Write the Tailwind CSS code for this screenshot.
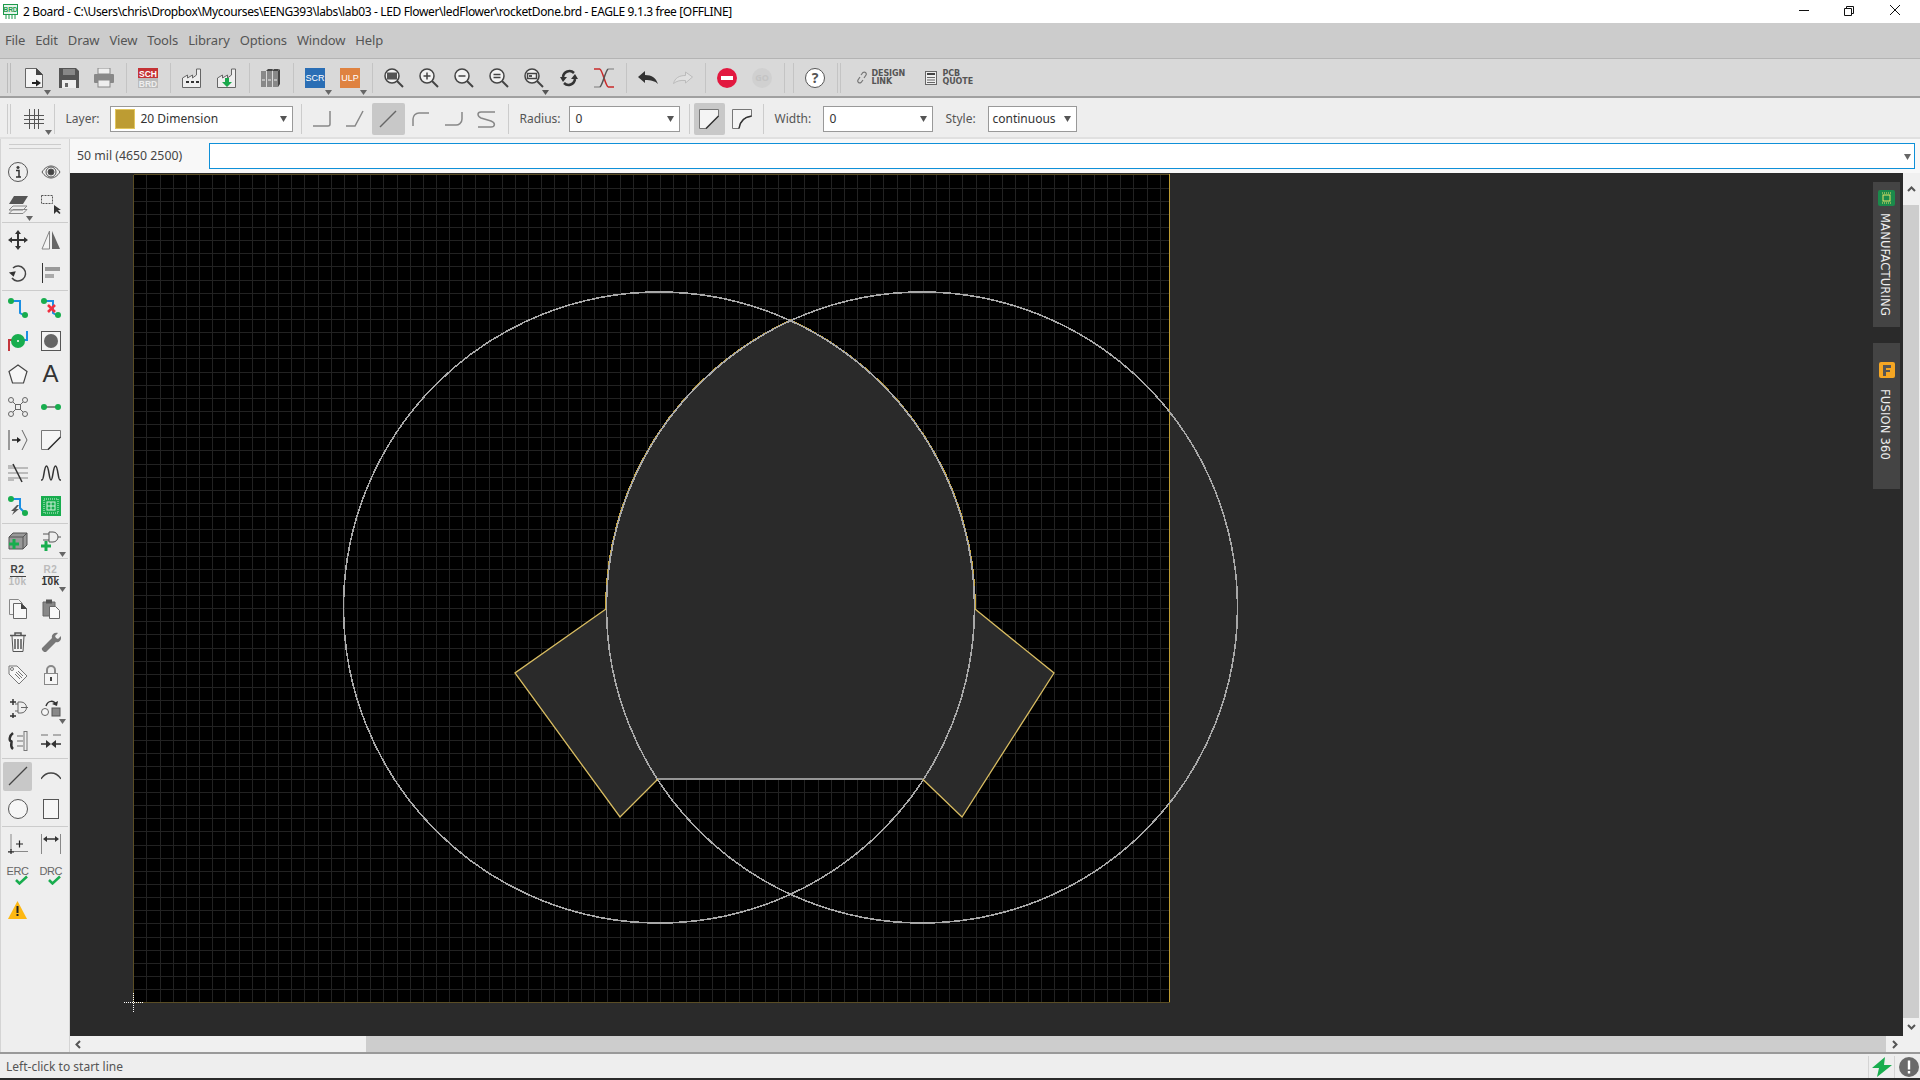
<!DOCTYPE html>
<html lang="en">

<head>
    <meta charset="UTF-8">
    <title>2 Board - EAGLE 9.1.3 free</title>
    <script src="https://cdn.jsdelivr.net/npm/@tailwindcss/browser@4"></script>
</head>

<body class="w-[1920px] h-[1080px] overflow-hidden flex flex-col bg-white text-[#444] text-[12px] font-['Noto_Sans',sans-serif]">

    <!-- Title bar -->
    <header class="h-[23px] shrink-0 bg-white flex items-center relative text-black">
        <svg class="ml-[3px]" width="15" height="15" viewBox="0 0 15 15"><rect x="0.500" y="0.500" width="14" height="10" fill="#e8f5ec" stroke="#1d9a4b"/><path d="M3 11v4M6 11v4M9 11v4M12 11v4" stroke="#1d9a4b"/><text x="7.500" y="8" font-size="6.500" font-weight="bold" text-anchor="middle" fill="#1d9a4b" font-family="Liberation Sans">BRD</text></svg>
        <span class="ml-[5px] text-[12px] tracking-[-0.36px]">2 Board - C:\Users\chris\Dropbox\Mycourses\EENG393\labs\lab03 - LED Flower\ledFlower\rocketDone.brd - EAGLE 9.1.3 free [OFFLINE]</span>
        <svg class="absolute left-[1799px] top-[5px]" width="106" height="12" viewBox="0 0 106 12" fill="none" stroke="#111"><path d="M0 5.500h10"/><path d="M45.500 3.500h7v7h-7zM47.500 3.500v-2h7v7h-2"/><path d="M91 0l10 10M101 0L91 10"/></svg>
    </header>

    <!-- Menu bar -->
    <nav class="h-[36px] shrink-0 bg-[#cccccc] border-b border-[#b4b4b4] flex items-center pl-[5px] gap-[10px] text-[13px] tracking-[-0.15px] text-[#555]">
        <span>File</span><span>Edit</span><span>Draw</span><span>View</span><span>Tools</span><span>Library</span><span>Options</span><span>Window</span><span>Help</span>
    </nav>

    <!-- Main toolbar -->
    <div class="h-[39px] shrink-0 bg-[#d9d9d9] border-b-2 border-[#a0a0a0] flex items-center">
        <div class="w-[16.500px] h-[30px] flex justify-start pl-[7px] gap-[2px]"><i class="w-px h-full bg-[#bbb]"></i><i class="w-px h-full bg-[#bbb]"></i></div>
        <div class="w-[35px] h-[34px] flex items-center justify-center relative">
            <svg width="20" height="20" viewBox="0 0 20 20"><path d="M1.500.5h11l6 6v13h-17z" fill="#f4f4f4" stroke="#666"/><path d="M12 0v7h7z" fill="#444"/><path d="M8 15h6" stroke="#222" stroke-width="2"/><path d="M12 11.500l5 3.500-5 3.500z" fill="#222"/></svg>
            <svg class="absolute right-[1px] bottom-0" width="7" height="5"><path d="M0 0h7L3.500 5z" fill="#666"/></svg>
        </div>
        <div class="w-[35px] h-[34px] flex items-center justify-center">
            <svg width="20" height="20" viewBox="0 0 20 20"><path d="M0 0h17l3 3v17H0z" fill="#555"/><rect x="4" y="1" width="12" height="6" fill="#888"/><rect x="3" y="12" width="14" height="8" fill="#eee"/><rect x="6" y="15" width="3" height="4" fill="#666"/></svg>
        </div>
        <div class="w-[35px] h-[34px] flex items-center justify-center">
            <svg width="20" height="20" viewBox="0 0 20 20"><rect x="4" y="0" width="12" height="6" fill="#eee" stroke="#888"/><rect x="0" y="6" width="20" height="9" rx="1" fill="#888"/><rect x="4" y="12" width="12" height="7" fill="#eee" stroke="#888"/></svg>
        </div>
        <div class="w-[9px] h-[30px] flex justify-center"><i class="w-px h-full bg-[#c4c4c4]"></i></div>
        <div class="w-[35px] h-[34px] flex items-center justify-center">
            <svg width="20" height="20" viewBox="0 0 20 20" font-family="Liberation Sans" font-size="8.500" font-weight="bold" text-anchor="middle"><rect width="20" height="10" fill="#c43235"/><rect y="10" width="20" height="10" fill="#bbb"/><text x="10" y="8.500" fill="#fff">SCH</text><text x="10" y="18.500" fill="#eee">BRD</text></svg>
        </div>
        <div class="w-[9px] h-[30px] flex justify-center"><i class="w-px h-full bg-[#c4c4c4]"></i></div>
        <div class="w-[35px] h-[34px] flex items-center justify-center">
            <svg width="20" height="20" viewBox="0 0 20 20"><path d="M.5 19.500V10l5-3v3l5-3v3l4-3V1h4v18.500z" fill="#eee" stroke="#666"/><path d="M4 14h3M9 14h3M14 14h3" stroke="#333" stroke-width="2"/></svg>
        </div>
        <div class="w-[35px] h-[34px] flex items-center justify-center">
            <svg width="20" height="20" viewBox="0 0 20 20"><path d="M.5 19.500V10l5-3v3l5-3v3l4-3V1h4v18.500z" fill="#eee" stroke="#666"/><path d="M8 10h4v4h3l-5 5-5-5h3z" fill="#19a84b"/></svg>
        </div>
        <div class="w-[9px] h-[30px] flex justify-center"><i class="w-px h-full bg-[#c4c4c4]"></i></div>
        <div class="w-[35px] h-[34px] flex items-center justify-center">
            <svg width="20" height="20" viewBox="0 0 20 20"><path d="M0 3h5v16H0zM6 3h5v16H6zM12 3h5v16h-5z" fill="#888"/><path d="M5 3l2-2h5l-1 2zM11 3l2-2h5l-1 2zM17 3l2-2v15l-2 3z" fill="#444"/><path d="M1 12h3M7 12h3M13 12h3" stroke="#eee"/></svg>
        </div>
        <div class="w-[9px] h-[30px] flex justify-center"><i class="w-px h-full bg-[#c4c4c4]"></i></div>
        <div class="w-[35px] h-[34px] flex items-center justify-center relative">
            <span class="w-[20px] h-[20px] bg-[#2a6eb5] text-white text-[9px] leading-[20px] text-center font-['Liberation_Sans',sans-serif]">SCR</span>
            <svg class="absolute right-[1px] bottom-0" width="7" height="5"><path d="M0 0h7L3.500 5z" fill="#666"/></svg>
        </div>
        <div class="w-[35px] h-[34px] flex items-center justify-center relative">
            <span class="w-[20px] h-[20px] bg-[#df8240] text-white text-[9px] leading-[20px] text-center font-['Liberation_Sans',sans-serif]">ULP</span>
            <svg class="absolute right-[1px] bottom-0" width="7" height="5"><path d="M0 0h7L3.500 5z" fill="#666"/></svg>
        </div>
        <div class="w-[9px] h-[30px] flex justify-center"><i class="w-px h-full bg-[#c4c4c4]"></i></div>
        <div class="w-[35px] h-[34px] flex items-center justify-center">
            <svg width="20" height="20" viewBox="0 0 20 20" fill="none" stroke="#444"><circle cx="8" cy="8" r="7" fill="#f2f2f2" stroke-width="1.500"/><path d="M13 13l6 6" stroke-width="2"/><rect x="3" y="4.500" width="10" height="7" fill="#555" stroke="none"/></svg>
        </div>
        <div class="w-[35px] h-[34px] flex items-center justify-center">
            <svg width="20" height="20" viewBox="0 0 20 20" fill="none" stroke="#444"><circle cx="8" cy="8" r="7" fill="#f2f2f2" stroke-width="1.500"/><path d="M13 13l6 6" stroke-width="2"/><path d="M4.500 8h7M8 4.500v7" stroke-width="1.500"/></svg>
        </div>
        <div class="w-[35px] h-[34px] flex items-center justify-center">
            <svg width="20" height="20" viewBox="0 0 20 20" fill="none" stroke="#444"><circle cx="8" cy="8" r="7" fill="#f2f2f2" stroke-width="1.500"/><path d="M13 13l6 6" stroke-width="2"/><path d="M4.500 8h7" stroke-width="1.500"/></svg>
        </div>
        <div class="w-[35px] h-[34px] flex items-center justify-center">
            <svg width="20" height="20" viewBox="0 0 20 20" fill="none" stroke="#444"><circle cx="8" cy="8" r="7" fill="#f2f2f2" stroke-width="1.500"/><path d="M13 13l6 6" stroke-width="2"/><path d="M4.500 6.500h7M4.500 9.500h7" stroke-width="1.500"/></svg>
        </div>
        <div class="w-[35px] h-[34px] flex items-center justify-center relative">
            <svg width="20" height="20" viewBox="0 0 20 20" fill="none" stroke="#444"><circle cx="8" cy="8" r="7" fill="#f2f2f2" stroke-width="1.500"/><path d="M13 13l6 6" stroke-width="2"/><rect x="3.500" y="5.500" width="9" height="5" stroke-width="1.500"/><rect x="5" y="7" width="3" height="2" fill="#555" stroke="none"/></svg>
            <svg class="absolute right-[3px] bottom-0" width="7" height="5"><path d="M0 0h7L3.500 5z" fill="#555"/></svg>
        </div>
        <div class="w-[35px] h-[34px] flex items-center justify-center">
            <svg width="20" height="20" viewBox="0 0 20 20" fill="none" stroke="#333" stroke-width="2.500"><path d="M4 9a6.500 6.500 0 0 1 11-4"/><path d="M16 11a6.500 6.500 0 0 1-11 4"/><path d="M1 9h7L4 14zM19 11h-7l4-5z" fill="#333" stroke="none"/></svg>
        </div>
        <div class="w-[35px] h-[34px] flex items-center justify-center">
            <svg width="20" height="20" viewBox="0 0 20 20" fill="none" stroke-width="1.500"><path d="M0 1h6" stroke="#c92a2a"/><path d="M14 1h6M0 19h6" stroke="#999"/><path d="M14 19h6M6 1c3 3 5 15 8 18" stroke="#c92a2a"/><path d="M14 1c-3 3-5 15-8 18" stroke="#555"/></svg>
        </div>
        <div class="w-[9px] h-[30px] flex justify-center"><i class="w-px h-full bg-[#c4c4c4]"></i></div>
        <div class="w-[35px] h-[34px] flex items-center justify-center">
            <svg width="20" height="14" viewBox="0 0 20 14"><path d="M0 6l7-6v4c7 0 11 3 13 9-3-3-7-4-13-4v3z" fill="#333"/></svg>
        </div>
        <div class="w-[35px] h-[34px] flex items-center justify-center">
            <svg width="20" height="14" viewBox="0 0 20 14"><path d="M19.500 6l-7-5v3.500C6 4.500 2 7 .5 12.500c3-2.500 7-3.500 12-3V12z" fill="#e0e0e0" stroke="#bbb"/></svg>
        </div>
        <div class="w-[9px] h-[30px] flex justify-center"><i class="w-px h-full bg-[#c4c4c4]"></i></div>
        <div class="w-[35px] h-[34px] flex items-center justify-center">
            <svg width="20" height="20" viewBox="0 0 20 20"><circle cx="10" cy="10" r="10" fill="#e2183f"/><rect x="4" y="8" width="12" height="4" fill="#fff"/></svg>
        </div>
        <div class="w-[35px] h-[34px] flex items-center justify-center">
            <span class="w-[20px] h-[20px] rounded-full bg-[#d0d0d0] text-[#c4c4c4] text-[9px] leading-[20px] text-center font-bold">GO</span>
        </div>
        <div class="w-[9px] h-[30px] flex justify-center"><i class="w-px h-full bg-[#c4c4c4]"></i></div>
        <div class="w-[9px] h-[30px] flex justify-center"><i class="w-px h-full bg-[#c4c4c4]"></i></div>
        <div class="w-[35px] h-[34px] flex items-center justify-center">
            <span class="w-[20px] h-[20px] rounded-full bg-white border border-[#555] text-[#555] text-[14px] leading-[18px] text-center font-bold">?</span>
        </div>
        <div class="ml-[4px] flex gap-[2px] h-[30px]"><i class="w-px h-full bg-[#c4c4c4]"></i><i class="w-px h-full bg-[#c4c4c4]"></i></div>
        <svg class="ml-[15px]" width="12" height="13" viewBox="0 0 12 13" fill="none" stroke="#777" stroke-width="1.200"><path d="M5 4l2-2.500a2 2 0 0 1 3 2.500L8 7"/><path d="M7 9l-2 2.500a2 2 0 0 1-3-2.500L4 6"/></svg>
        <span class="ml-[4px] w-[44px] text-[8px] leading-[8px] tracking-[-0.1px] font-bold text-[#555] font-['DejaVu_Sans',sans-serif]">DESIGN<br>LINK</span>
        <svg class="ml-[9px]" width="12" height="14" viewBox="0 0 12 14"><rect x=".5" y=".5" width="11" height="13" fill="#eee" stroke="#666"/><path d="M2 3h8" stroke="#444" stroke-width="2"/><path d="M2 6.500h8M2 9h8M2 11.500h8" stroke="#666"/></svg>
        <span class="ml-[6px] text-[8px] leading-[8px] tracking-[-0.1px] font-bold text-[#555] font-['DejaVu_Sans',sans-serif]">PCB<br>QUOTE</span>
    </div>

    <!-- Tool options toolbar -->
    <div class="h-[41px] shrink-0 bg-[#eeeeee] border-b-2 border-[#e0e0e0] pt-[3px] flex items-center relative">
        <div class="w-[16.500px] h-[30px] flex justify-start pl-[7px] gap-[2px]"><i class="w-px h-full bg-[#ccc]"></i><i class="w-px h-full bg-[#ccc]"></i></div>
        <div class="w-[35px] h-[32px] flex items-center justify-center relative">
            <svg width="20" height="20" viewBox="0 0 20 20" fill="none" stroke="#555"><path d="M0 6.500h20M0 10.500h20M0 14.500h20M5.500 0v20M10.500 0v20M14.500 0v20"/></svg>
            <svg class="absolute right-[0px] bottom-0" width="7" height="5"><path d="M0 0h7L3.500 5z" fill="#666"/></svg>
        </div>
        <div class="ml-[2px] w-px h-[30px] bg-[#ccc]"></div>
        <span class="ml-[11px] w-[33px] text-[12px] text-[#555]">Layer:</span>
        <div class="ml-[11px] w-[183px] h-[26px] bg-white border border-[#999] flex items-center relative">
            <span class="ml-[4px] w-[20px] h-[20px] bg-[#bd9c33] border border-[#e2c65e]"></span>
            <span class="ml-[6px] text-[12px] text-[#333]">20 Dimension</span>
            <svg class="absolute right-[5px] top-[9px]" width="7" height="6"><path d="M0 0h7L3.500 6z" fill="#555"/></svg>
        </div>
        <div class="ml-[8px] w-px h-[30px] bg-[#ccc]"></div>
        <div class="ml-[4px] flex items-center">
            <div class="w-[33px] h-[32px] flex items-center justify-center"><svg width="20" height="20" viewBox="0 0 20 20" fill="none" stroke="#888" stroke-width="1.500"><path d="M1 17h15a2 2 0 0 0 2-2V2"/></svg></div>
            <div class="w-[33px] h-[32px] flex items-center justify-center"><svg width="20" height="20" viewBox="0 0 20 20" fill="none" stroke="#888" stroke-width="1.500"><path d="M1 17h9l8-15"/></svg></div>
            <div class="w-[33px] h-[32px] flex items-center justify-center bg-[#c8c8c8] rounded-[2px]"><svg width="20" height="20" viewBox="0 0 20 20" fill="none" stroke="#666" stroke-width="1.500"><path d="M2 18L18 2"/></svg></div>
            <div class="w-[33px] h-[32px] flex items-center justify-center"><svg width="20" height="20" viewBox="0 0 20 20" fill="none" stroke="#888" stroke-width="1.500"><path d="M2 17v-7a6 6 0 0 1 6-6h10"/></svg></div>
            <div class="w-[33px] h-[32px] flex items-center justify-center"><svg width="20" height="20" viewBox="0 0 20 20" fill="none" stroke="#888" stroke-width="1.500"><path d="M1 16h10a6 6 0 0 0 7-6V3"/></svg></div>
            <div class="w-[33px] h-[32px] flex items-center justify-center"><svg width="20" height="20" viewBox="0 0 20 20" fill="none" stroke="#888" stroke-width="1.500"><path d="M18 3H4C0 3 0 7 4 9l10 3c5 2 4 6 0 6H1"/></svg></div>
        </div>
        <div class="ml-[4px] w-px h-[30px] bg-[#ccc]"></div>
        <span class="ml-[11px] w-[39px] text-[12px] text-[#555]">Radius:</span>
        <div class="ml-[10px] w-[111px] h-[26px] bg-white border border-[#999] flex items-center relative">
            <span class="ml-[6px] text-[12px] text-[#333]">0</span>
            <svg class="absolute right-[5px] top-[9px]" width="7" height="6"><path d="M0 0h7L3.500 6z" fill="#555"/></svg>
        </div>
        <div class="ml-[9px] w-px h-[30px] bg-[#ccc]"></div>
        <div class="ml-[4px] w-[31px] h-[32px] flex items-center justify-center bg-[#c8c8c8] rounded-[2px]"><svg width="20" height="20" viewBox="0 0 20 20" fill="none"><path d="M.5 19.500V.5h19v7l-12 12z" fill="#f4f4f4" stroke="#777"/><path d="M7 19.500L19.500 7" stroke="#333" stroke-width="1.500"/></svg></div>
        <div class="ml-[1px] w-[33px] h-[32px] flex items-center justify-center"><svg width="20" height="20" viewBox="0 0 20 20" fill="none"><path d="M.5 19.500V.5h19v7C12 8 8 12 7 19.500z" fill="#f4f4f4" stroke="#777"/><path d="M7 19.500C8 12 12 8 19.500 7" stroke="#333" stroke-width="1.500"/></svg></div>
        <div class="ml-[4px] w-px h-[30px] bg-[#ccc]"></div>
        <span class="ml-[11px] w-[37px] text-[12px] text-[#555]">Width:</span>
        <div class="ml-[11px] w-[110px] h-[26px] bg-white border border-[#999] flex items-center relative">
            <span class="ml-[6px] text-[12px] text-[#333]">0</span>
            <svg class="absolute right-[5px] top-[9px]" width="7" height="6"><path d="M0 0h7L3.500 6z" fill="#555"/></svg>
        </div>
        <span class="ml-[13px] w-[32px] text-[12px] text-[#555]">Style:</span>
        <div class="ml-[10px] w-[89px] h-[26px] bg-white border border-[#999] flex items-center relative">
            <span class="ml-[4px] text-[12px] text-[#333]">continuous</span>
            <svg class="absolute right-[5px] top-[9px]" width="7" height="6"><path d="M0 0h7L3.500 6z" fill="#555"/></svg>
        </div>
    </div>

    <div class="flex-1 flex min-h-0">
        <!-- Left tool column -->
        <aside class="w-[70px] shrink-0 bg-[#eeeeee] border-l border-r border-[#d4d4d4] text-[#555]">
            <div class="h-[16.500px] pt-[5px] px-[8px]">
                <div class="h-[5px] border-t border-b border-[#ccc]"></div>
            </div>
            <div class="grid grid-cols-[33px_33px] auto-rows-[33px] place-items-center">
                <svg width="20" height="20" viewBox="0 0 20 20" fill="none" stroke="#555"><circle cx="10" cy="10" r="9.500"/><circle cx="10" cy="5.500" r="1.200" fill="#333"/><path d="M8 8.500h3v6.500M8 15h5" stroke="#333" stroke-width="1.500"/></svg>
                <svg width="20" height="16" viewBox="0 0 20 16" fill="none" stroke="#555"><path d="M1 8c5-8 13-8 18 0-5 8-13 8-18 0z"/><circle cx="10" cy="8" r="5"/><circle cx="10" cy="8" r="3" fill="#444"/></svg>
                <div class="relative w-[33px] h-[33px] flex items-center justify-center"><svg width="20" height="20" viewBox="0 0 20 20" fill="none" stroke="#888"><path d="M1 15l4-4h14l-4 4zM1 18.500l4-4h14l-4 4z"/><path d="M1 9l5-8h14l-5 8z" fill="#555" stroke="none"/></svg><svg class="absolute right-[1px] bottom-[1px]" width="7" height="5"><path d="M0 0h7L3.500 5z" fill="#666"/></svg></div>
                <svg width="20" height="20" viewBox="0 0 20 20" fill="none"><rect x=".5" y=".5" width="11" height="8" stroke="#555" stroke-dasharray="2 1"/><path d="M13 10v9l2.500-2.500 3 2.500 1-1-2.500-3h3z" fill="#333"/></svg>
            </div>
            <div class="h-[2px] px-[1px]"><div class="h-px bg-[#ccc]"></div></div>
            <div class="grid grid-cols-[33px_33px] auto-rows-[33px] place-items-center">
                <svg width="20" height="20" viewBox="0 0 20 20"><path d="M9 4h2v5h5V7l4 3-4 3v-2h-5v5h2l-3 4-3-4h2v-5H4v2l-4-3 4-3v2h5V4H7l3-4 3 4z" fill="#333"/></svg>
                <svg width="20" height="20" viewBox="0 0 20 20"><path d="M8.500 1v18H1z" fill="#f4f4f4" stroke="#888"/><path d="M11 1l8 18h-8z" fill="#666"/></svg>
                <svg width="20" height="20" viewBox="0 0 20 20" fill="none"><path d="M5 5a7.500 7.500 0 1 1-1 10" stroke="#444" stroke-width="1.500"/><path d="M1 9h7l-3 5z" fill="#333" transform="rotate(-10 4 10)"/></svg>
                <svg width="20" height="20" viewBox="0 0 20 20"><rect x="1" y="0" width="1" height="20" fill="#333"/><rect x="4" y="4" width="15" height="4" fill="#999"/><rect x="4" y="11" width="9" height="4" fill="#aaa"/></svg>
            </div>
            <div class="h-[2px] px-[1px]"><div class="h-px bg-[#ccc]"></div></div>
            <div class="grid grid-cols-[33px_33px] auto-rows-[33px] place-items-center">
                <svg width="20" height="20" viewBox="0 0 20 20" fill="none"><path d="M3 3h9v12l5 3" stroke="#1b8fe3" stroke-width="2"/><circle cx="3" cy="3" r="3" fill="#18ad4e"/><circle cx="17" cy="17" r="3" fill="#18ad4e"/></svg>
                <svg width="20" height="20" viewBox="0 0 20 20" fill="none"><path d="M3 3h9v12l5 3" stroke="#1b8fe3" stroke-width="2"/><circle cx="3" cy="3" r="3" fill="#18ad4e"/><circle cx="17" cy="17" r="3" fill="#18ad4e"/><path d="M7 7l7 7M14 7l-7 7" stroke="#f03040" stroke-width="2.500"/></svg>
                <svg width="20" height="20" viewBox="0 0 20 20" fill="none"><path d="M1 20V9h8" stroke="#c4363c" stroke-width="2"/><path d="M10 9h9V0" stroke="#1b8fe3" stroke-width="2"/><circle cx="10" cy="10" r="7" fill="#18ad4e"/><circle cx="10" cy="10" r="1" fill="#fff"/></svg>
                <svg width="20" height="20" viewBox="0 0 20 20"><rect x=".5" y=".5" width="19" height="19" fill="#f4f4f4" stroke="#555"/><circle cx="10" cy="10" r="7" fill="#666"/></svg>
                <svg width="20" height="20" viewBox="0 0 20 20" fill="none" stroke="#444" stroke-width="1.200"><path d="M10 1l9 6.500L15.500 19h-11L1 7.500z" fill="#f6f6f6"/></svg>
                <span class="text-[24px] leading-none font-['Liberation_Sans',sans-serif] text-[#333]">A</span>
                <svg width="20" height="20" viewBox="0 0 20 20" fill="none" stroke="#666"><rect x="7.500" y="7.500" width="5" height="5"/><circle cx="3" cy="3" r="2.500"/><circle cx="17" cy="3" r="2.500"/><circle cx="3" cy="17" r="2.500"/><circle cx="17" cy="17" r="2.500"/><path d="M5 5l3 3M15 5l-3 3M5 15l3-3M15 15l-3-3"/></svg>
                <svg width="20" height="8" viewBox="0 0 20 8"><path d="M3 4h14" stroke="#888" stroke-width="2"/><circle cx="3" cy="4" r="3" fill="#18ad4e"/><circle cx="17" cy="4" r="3" fill="#18ad4e"/></svg>
                <svg width="20" height="20" viewBox="0 0 20 20" fill="none" stroke="#666"><path d="M1 0v20" stroke="#444"/><path d="M14 0l5 10-5 10"/><path d="M4 10h7" stroke="#222" stroke-width="1.500"/><path d="M9 7l4 3-4 3z" fill="#222" stroke="none"/></svg>
                <svg width="20" height="20" viewBox="0 0 20 20" fill="none"><path d="M.5 19.500V.5h19v7l-12 12z" fill="#f6f6f6" stroke="#777"/><path d="M7 19.500L19.500 7" stroke="#333" stroke-width="1.500"/></svg>
                <svg width="20" height="20" viewBox="0 0 20 20" fill="none" stroke="#aaa" stroke-width="1.500"><path d="M0 5h20M0 10h20M0 15h20M0 3h6M0 17h6"/><path d="M5 1l9 18" stroke="#333"/></svg>
                <svg width="20" height="20" viewBox="0 0 20 20" fill="none" stroke="#333" stroke-width="1.500"><path d="M0 17h1c2 0 2-14 4.500-14S8 17 10 17s2-14 4.500-14S17 17 19 17h1"/></svg>
                <svg width="20" height="20" viewBox="0 0 20 20" fill="none"><path d="M3 3h9v9l5 5" stroke="#1b8fe3" stroke-width="2"/><circle cx="3" cy="3" r="3" fill="#18ad4e"/><circle cx="17" cy="17" r="3" fill="#18ad4e"/><path d="M9 9l-6 6h3l-2 4 7-6H8l3-4z" fill="#555"/></svg>
                <svg width="20" height="20" viewBox="0 0 20 20"><rect width="20" height="20" fill="#18ad4e"/><rect x="3" y="3" width="14" height="14" fill="none" stroke="#cff0da" stroke-dasharray="1 1"/><rect x="6" y="6" width="8" height="8" fill="none" stroke="#cff0da"/><path d="M10 6v8M6 10h8" stroke="#cff0da"/></svg>
            </div>
            <div class="h-[2px] px-[1px]"><div class="h-px bg-[#ccc]"></div></div>
            <div class="grid grid-cols-[33px_33px] auto-rows-[33px] place-items-center">
                <svg width="20" height="18" viewBox="0 0 20 18"><path d="M1 5l4-4h14v12l-4 4H1z" fill="#999" stroke="#555"/><path d="M1 5h14v12M15 5l4-4" fill="none" stroke="#555"/><path d="M1 12h10M6 7v10" stroke="#18ad4e" stroke-width="3"/></svg>
                <div class="relative w-[33px] h-[33px] flex items-center justify-center"><svg width="20" height="20" viewBox="0 0 20 20" fill="none"><path d="M8 1h4a5 5 0 0 1 0 10H8zM2 3h6M2 9h6M17 6h3" stroke="#555"/><path d="M0 15h10M5 10v10" stroke="#18ad4e" stroke-width="3"/></svg><svg class="absolute right-[1px] bottom-[1px]" width="7" height="5"><path d="M0 0h7L3.500 5z" fill="#666"/></svg></div>
            </div>
            <div class="h-[2px] px-[1px]"><div class="h-px bg-[#ccc]"></div></div>
            <div class="grid grid-cols-[33px_33px] auto-rows-[33px] place-items-center">
                <span class="flex flex-col items-center font-bold font-['Liberation_Sans',sans-serif] text-[10px] leading-[10px] tracking-[0.5px]"><span class="border-b border-[#444] text-[#444] pb-px w-[16px] text-center">R2</span><span class="text-[#bbb]">10k</span></span>
                <div class="relative w-[33px] h-[33px] flex items-center justify-center"><span class="flex flex-col items-center font-bold font-['Liberation_Sans',sans-serif] text-[10px] leading-[10px] tracking-[0.5px]"><span class="border-b border-[#444] text-[#bbb] pb-px w-[16px] text-center">R2</span><span class="text-[#333]">10k</span></span><svg class="absolute right-[1px] bottom-[1px]" width="7" height="5"><path d="M0 0h7L3.500 5z" fill="#666"/></svg></div>
                <svg width="18" height="20" viewBox="0 0 18 20"><path d="M.5.5h9l4 4v11H.5z" fill="#f4f4f4" stroke="#888"/><path d="M4.500 4.500h8l5 5v10h-13z" fill="#f8f8f8" stroke="#666"/><path d="M12 4l6 6h-6z" fill="#444"/></svg>
                <svg width="18" height="20" viewBox="0 0 18 20"><path d="M1 3h12v14H1z" fill="#888" stroke="#666"/><rect x="4" y="0.500" width="6" height="4" fill="#555"/><path d="M7.500 7.500h6l4 4v8h-10z" fill="#f8f8f8" stroke="#666"/></svg>
                <svg width="16" height="20" viewBox="0 0 16 20" fill="none" stroke="#555"><path d="M2 4l1 15.500h10l1-15.500" fill="#f4f4f4"/><path d="M0 3.500h16M5 3V1h6v2" stroke-width="1.500"/><path d="M5 7v10M8 7v10M11 7v10" stroke-width="1.500"/></svg>
                <svg width="20" height="20" viewBox="0 0 20 20"><path d="M1 16L11 6c-1-3 2-6 6-5l-3 3 1 2 2 1 3-3c1 4-2 7-5 6L5 20c-2 1-5-2-4-4z" fill="#777"/></svg>
                <svg width="20" height="20" viewBox="0 0 20 20" fill="#f6f6f6" stroke="#777"><path d="M1 3V1h8l10 10-8 8L1 9z"/><circle cx="4" cy="4" r="1.500"/><path d="M8 7l6 6M7 9l5 5M10 6l5 5" fill="none"/></svg>
                <svg width="14" height="20" viewBox="0 0 14 20" fill="none" stroke="#888"><path d="M3 9V5a4 4 0 0 1 8 0v4" stroke-width="2"/><rect x=".5" y="8.500" width="13" height="11" fill="#f6f6f6"/><rect x="6" y="12" width="2" height="4" fill="#444" stroke="none"/></svg>
                <svg width="20" height="20" viewBox="0 0 20 20" fill="none"><path d="M2 4h6M5 1v6M2 18h6M5 15v5" stroke="#333" stroke-width="1.500"/><path d="M10 4h3a5 5 0 0 1 0 11h-3zM13 9.500h7M7 6h3M7 13h3" stroke="#666"/></svg>
                <div class="relative w-[33px] h-[33px] flex items-center justify-center"><svg width="20" height="20" viewBox="0 0 20 20" fill="none"><path d="M5 8C7 2 13 2 15 7" stroke="#333" stroke-width="1.500"/><path d="M11 6l5 2 1-5z" fill="#333"/><circle cx="4" cy="14" r="3.500" fill="#f6f6f6" stroke="#666"/><rect x="11" y="10" width="8" height="8" fill="#888" stroke="#555"/></svg><svg class="absolute right-[1px] bottom-[1px]" width="7" height="5"><path d="M0 0h7L3.500 5z" fill="#666"/></svg></div>
                <svg width="20" height="20" viewBox="0 0 20 20" fill="none"><path d="M5 2C1 5 1 10 3 10S1 15 5 18" stroke="#333" stroke-width="2.500"/><path d="M9 5h6M9 10h6M9 15h6" stroke="#999" stroke-width="1.500"/><rect x="16" y=".5" width="3" height="19" stroke="#777"/></svg>
                <svg width="20" height="16" viewBox="0 0 20 16" fill="none"><path d="M0 2h7M12 2h8" stroke="#999" stroke-width="1.500"/><path d="M0 11h6M14 11h6" stroke="#333" stroke-width="1.500"/><path d="M5 7l5 4-5 4zM15 7l-5 4 5 4z" fill="#333"/></svg>
            </div>
            <div class="h-[2px] px-[1px]"><div class="h-px bg-[#ccc]"></div></div>
            <div class="grid grid-cols-[33px_33px] auto-rows-[33px] place-items-center">
                <div class="w-[29px] h-[29px] bg-[#c8c8c8] rounded-[2px] flex items-center justify-center"><svg width="20" height="20" viewBox="0 0 20 20" fill="none"><path d="M1 19L19 1" stroke="#444" stroke-width="1.300"/></svg></div>
                <svg width="20" height="8" viewBox="0 0 20 8" fill="none"><path d="M0 7c5-8 15-8 20 0" stroke="#444" stroke-width="1.300"/></svg>
                <svg width="20" height="20" viewBox="0 0 20 20" fill="none"><circle cx="10" cy="10" r="9.500" fill="#f6f6f6" stroke="#555"/></svg>
                <svg width="16" height="20" viewBox="0 0 16 20" fill="none"><rect x=".5" y=".5" width="15" height="19" fill="#f6f6f6" stroke="#555"/></svg>
            </div>
            <div class="h-[2px] px-[1px]"><div class="h-px bg-[#ccc]"></div></div>
            <div class="grid grid-cols-[33px_33px] auto-rows-[32px] place-items-center">
                <svg width="20" height="20" viewBox="0 0 20 20" fill="none"><path d="M3 0v16M0 17.500h20" stroke="#888"/><path d="M8 10h7M11.500 6.500v7M0 18h6M3 15v5" stroke="#222" stroke-width="1.200"/></svg>
                <svg width="20" height="20" viewBox="0 0 20 20" fill="none"><path d="M.5 0v20M19.500 0v20" stroke="#888"/><path d="M4 5h12" stroke="#333" stroke-width="1.500"/><path d="M6 2L2 5l4 3zM14 2l4 3-4 3z" fill="#333"/></svg>
                <span class="relative w-[22px] h-[20px] text-[11px] leading-[10px] tracking-[-0.4px] text-[#666] font-['Liberation_Sans',sans-serif]">ERC<svg class="absolute left-[8px] top-[9px]" width="13" height="10" viewBox="0 0 13 10" fill="none"><path d="M1 5l3.500 3.500L12 1.500" stroke="#18ad4e" stroke-width="2.500"/></svg></span>
                <span class="relative w-[22px] h-[20px] text-[11px] leading-[10px] tracking-[-0.4px] text-[#666] font-['Liberation_Sans',sans-serif]">DRC<svg class="absolute left-[8px] top-[9px]" width="13" height="10" viewBox="0 0 13 10" fill="none"><path d="M1 5l3.500 3.500L12 1.500" stroke="#18ad4e" stroke-width="2.500"/></svg></span>
            </div>
            <div class="h-[36px] pl-[7px] flex items-center">
                <svg width="19" height="18" viewBox="0 0 19 18"><path d="M9.500 0L19 18H0z" fill="#fdb813"/><rect x="8.500" y="5" width="2" height="7" fill="#222"/><rect x="8.500" y="13" width="2" height="2" fill="#222"/></svg>
            </div>
        </aside>

        <div class="flex-1 flex flex-col min-w-0">
            <!-- Coordinate and command line -->
            <div class="h-[34px] shrink-0 bg-[#f8f8f8] flex items-center">
                <span class="ml-[7px] w-[132px] text-[12.300px] text-[#444]">50 mil (4650 2500)</span>
                <div class="w-[1706px] h-[26px] bg-white border border-[#0f90d8] relative">
                    <svg class="absolute right-[3px] top-[10px]" width="7" height="6"><path d="M0 0h7L3.500 6z" fill="#666"/></svg>
                </div>
            </div>

            <div class="flex-1 flex min-h-0">
                <!-- Board canvas -->
                <div class="flex-1 relative bg-[#2a2a2a] overflow-hidden">
                    <svg id="board" class="block" width="1833" height="863" viewBox="70 173 1833 863" fill="none">
                        <rect x="134" y="174" width="1035" height="828" fill="#000"/>
                        <g id="grid" shape-rendering="crispEdges" stroke="#222"></g>
                        <path d="M606 609A316 316 0 0 1 790.500 321A316 316 0 0 1 975 609L1054 673L962 817L922.500 779H658L620 817L515 673Z" fill="#2a2a2a"/>
                        <path d="M133.500 174.500H1169.500M133.500 174.500V1002.500M133.500 1002.500H1169.500" stroke="#5a4d25" shape-rendering="crispEdges"/>
                        <path d="M1169.500 174V1002" stroke="#bd9c33" shape-rendering="crispEdges"/>
                        <path d="M605.500 609A316.500 316.500 0 0 1 790.500 320A316.500 316.500 0 0 1 975.500 609" stroke="#c9a63c" shape-rendering="crispEdges"/>
                        <circle cx="659" cy="607.500" r="315.500" stroke="#a8a8a8" stroke-width="1.600" shape-rendering="crispEdges"/>
                        <circle cx="922" cy="607.500" r="315.500" stroke="#a8a8a8" stroke-width="1.600" shape-rendering="crispEdges"/>
                        <path d="M606 609L515 673L620 817L658 779M975 609L1054 673L962 817L922.500 779" stroke="#d9bd62" stroke-width="1.300"/>
                        <path d="M658 779H922.500" stroke="#bdbdbd" stroke-width="1.500"/>
                        <path d="M124 1002.500H143M133.500 993V1012" stroke="#fff" stroke-dasharray="1 1" shape-rendering="crispEdges"/>
                    </svg>
                    <!-- Panels docked over the canvas -->
                    <div class="absolute left-[1803px] top-[9px] w-[27px] h-[145px] bg-[#444] flex flex-col items-center pt-[8px]">
                        <svg width="17" height="16" viewBox="0 0 17 16"><rect width="17" height="16" rx="2" fill="#1b8a4b"/><rect x="5" y="5" width="7" height="6" fill="#1b8a4b" stroke="#e8e36a"/><path d="M4 3h9M4 13h9" stroke="#e8e36a" stroke-dasharray="1 1"/></svg>
                        <span class="mt-[7px] mr-[3px] [writing-mode:vertical-rl] text-[11.500px] leading-[12px] text-[#eee] font-['DejaVu_Sans',sans-serif] tracking-[0.2px]">MANUFACTURING</span>
                    </div>
                    <div class="absolute left-[1803px] top-[170px] w-[27px] h-[146px] bg-[#444] flex flex-col items-center pt-[19px]">
                        <svg width="16" height="16" viewBox="0 0 16 16"><rect width="16" height="16" rx="2" fill="#f5a623"/><path d="M4 3h8v3H7v2h4v2H7v4H4z" fill="#555"/></svg>
                        <span class="mt-[11px] mr-[3px] [writing-mode:vertical-rl] text-[11.500px] leading-[12px] text-[#eee] font-['DejaVu_Sans',sans-serif] tracking-[0.2px]">FUSION 360</span>
                    </div>
                </div>
                <!-- Vertical scrollbar -->
                <div class="w-[17px] shrink-0 bg-[#f0f0f0] flex flex-col items-center pr-px">
                    <div class="h-[32px] w-full flex items-center justify-center"><svg width="9" height="6" viewBox="0 0 9 6" fill="none"><path d="M1 5l3.500-3.500L8 5" stroke="#555" stroke-width="2"/></svg></div>
                    <div class="flex-1 w-full bg-[#cdcdcd]"></div>
                    <div class="h-[18px] w-full flex items-center justify-center"><svg width="9" height="6" viewBox="0 0 9 6" fill="none"><path d="M1 1l3.500 3.500L8 1" stroke="#555" stroke-width="2"/></svg></div>
                </div>
            </div>

            <!-- Horizontal scrollbar -->
            <div class="h-[16px] shrink-0 bg-[#f0f0f0] flex items-center">
                <div class="w-[296px] flex pl-[5px]"><svg width="6" height="9" viewBox="0 0 6 9" fill="none"><path d="M5 1L1.500 4.500 5 8" stroke="#555" stroke-width="2"/></svg></div>
                <div class="w-[1520px] h-full bg-[#cdcdcd]"></div>
                <svg class="ml-[6px]" width="6" height="9" viewBox="0 0 6 9" fill="none"><path d="M1 1l3.500 3.500L1 8" stroke="#555" stroke-width="2"/></svg>
            </div>
        </div>
    </div>

    <!-- Status bar -->
    <footer class="h-[28px] shrink-0 bg-[#eeeeee] border-t-[2px] border-b-[2px] border-t-[#999] border-b-[#2a2a2a] pt-[2px] flex items-center text-[12px] text-[#555]">
        <span class="ml-[6px] flex-1">Left-click to start line</span>
        <div class="w-px h-[22px] bg-[#d4d4d4]"></div>
        <div class="w-[25px] flex justify-center"><svg width="20" height="20" viewBox="0 0 20 20"><path d="M13 0L0 11h7l-2 9 15-12h-8z" fill="#18ad4e"/></svg></div>
        <div class="w-px h-[22px] bg-[#d4d4d4]"></div>
        <svg class="ml-[4px] mr-px" width="20" height="20" viewBox="0 0 20 20"><circle cx="10" cy="10" r="10" fill="#6a6a6a"/><rect x="8.800" y="3.500" width="2.400" height="9" fill="#fff"/><rect x="8.800" y="14" width="2.400" height="2.500" fill="#fff"/></svg>
    </footer>

    <script>
        // grid lines are drawn one by one so they stay on whole pixels
        const grid = document.getElementById('grid');
        function addLine(x1, y1, x2, y2) {
            const line = document.createElementNS('http://www.w3.org/2000/svg', 'line');
            line.setAttribute('x1', x1);
            line.setAttribute('y1', y1);
            line.setAttribute('x2', x2);
            line.setAttribute('y2', y2);
            grid.appendChild(line);
        }
        for (let x = 133.3 + 13.16; x < 1169; x += 13.16) {
            addLine(Math.round(x) + 0.5, 174, Math.round(x) + 0.5, 1002);
        }
        for (let y = 1002.3 - 13.14; y > 174; y -= 13.14) {
            addLine(134, Math.round(y) + 0.5, 1169, Math.round(y) + 0.5);
        }
    </script>
</body>

</html>
